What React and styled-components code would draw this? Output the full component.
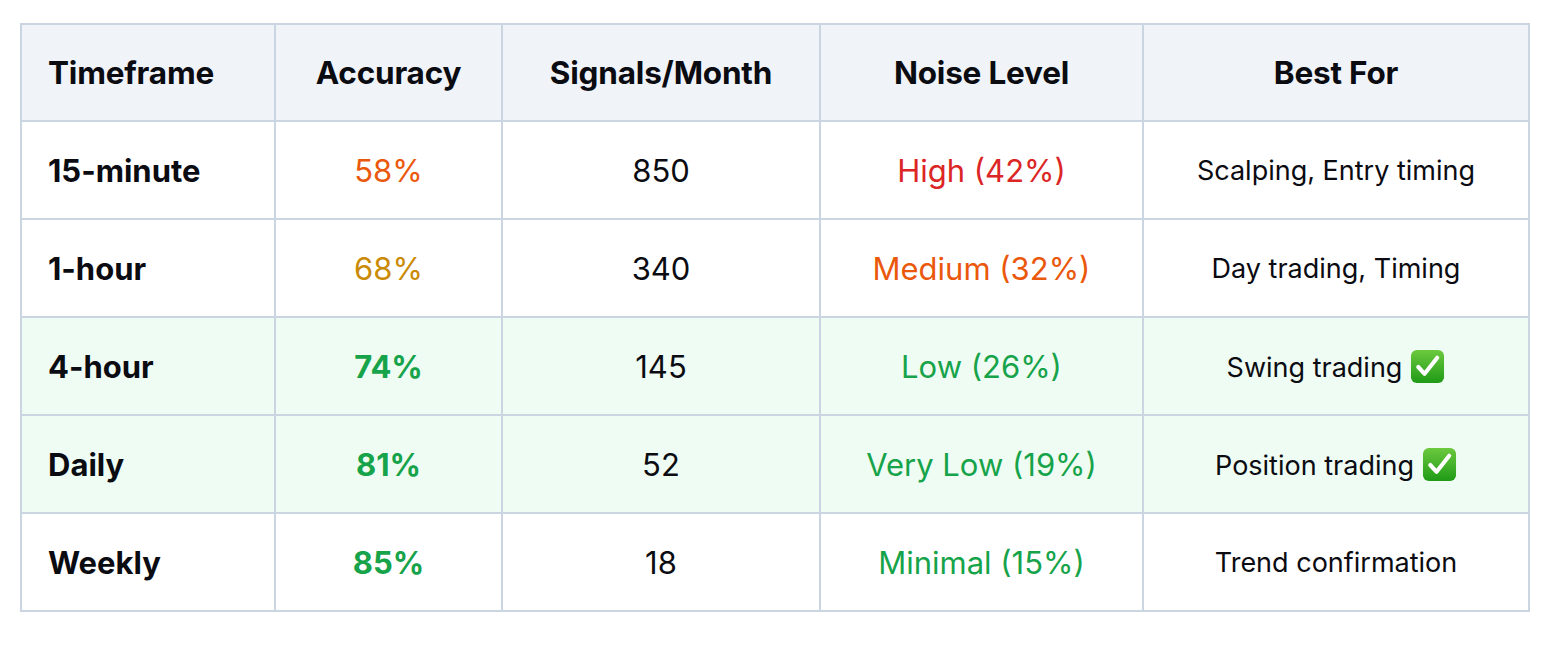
import React from 'react'
import styled, { createGlobalStyle } from 'styled-components'

const GlobalStyle = createGlobalStyle`
  html, body {
    margin: 0;
    padding: 0;
    background: #ffffff;
    font-family: Inter, 'Noto Sans', sans-serif;
    color: #0f0f14;
  }
`

const Page = styled.div`
  padding: 23px 16px 0 20px;
`

const Table = styled.table`
  width: 1508px;
  border-collapse: collapse;
  table-layout: fixed;
  border: 2px solid #cbd5e1;
`

const HeadCell = styled.th`
  box-sizing: border-box;
  width: ${(p) => p.$width}px;
  height: 97px;
  padding: 0 26px;
  background: #f0f4f9;
  border: 2px solid #cbd5e1;
  font-size: 31.5px;
  font-weight: 700;
  letter-spacing: -0.2px;
  text-align: ${(p) => (p.$left ? 'left' : 'center')};
  color: #0b0b12;
`

const Row = styled.tr`
  background: ${(p) => (p.$highlight ? '#effcf3' : '#ffffff')};
`

const Cell = styled.td`
  height: 96px;
  padding: 0 26px;
  border: 2px solid #cbd5e1;
  font-size: ${(p) => (p.$small ? 27 : 31)}px;
  font-weight: ${(p) => (p.$bold ? 700 : 400)};
  text-align: ${(p) => (p.$left ? 'left' : 'center')};
  color: ${(p) => p.$color || '#0b0b12'};
  white-space: nowrap;
`

const Check = styled.svg`
  width: 35px;
  height: 35px;
  vertical-align: -7px;
  margin-left: 8px;
`

const CheckMark = () => (
  <Check viewBox="0 0 36 36">
    <defs>
      <linearGradient id="chk" x1="0" y1="0" x2="0" y2="1">
        <stop offset="0" stopColor="#6cc93e" />
        <stop offset="1" stopColor="#1f9a17" />
      </linearGradient>
    </defs>
    <rect x="1" y="1" width="34" height="34" rx="6" fill="url(#chk)" />
    <path
      d="M8.5 18.5 L15 25.5 L28 9"
      fill="none"
      stroke="#ffffff"
      strokeWidth="4.2"
      strokeLinecap="round"
      strokeLinejoin="round"
    />
  </Check>
)

const ORANGE = '#ea580c'
const AMBER = '#ca8a04'
const RED = '#dc2626'
const GREEN = '#16a34a'

const rows = [
  { tf: '15-minute', acc: '58%', accColor: ORANGE, sig: '850', noise: 'High (42%)', noiseColor: RED, best: 'Scalping, Entry timing' },
  { tf: '1-hour', acc: '68%', accColor: AMBER, sig: '340', noise: 'Medium (32%)', noiseColor: ORANGE, best: 'Day trading, Timing' },
  { tf: '4-hour', acc: '74%', accColor: GREEN, bold: true, sig: '145', noise: 'Low (26%)', noiseColor: GREEN, best: 'Swing trading', check: true, highlight: true },
  { tf: 'Daily', acc: '81%', accColor: GREEN, bold: true, sig: '52', noise: 'Very Low (19%)', noiseColor: GREEN, best: 'Position trading', check: true, highlight: true },
  { tf: 'Weekly', acc: '85%', accColor: GREEN, bold: true, sig: '18', noise: 'Minimal (15%)', noiseColor: GREEN, best: 'Trend confirmation' },
]

export default function App() {
  return (
    <Page>
      <GlobalStyle />
      <Table>
        <thead>
          <tr>
            <HeadCell $width={254} $left>Timeframe</HeadCell>
            <HeadCell $width={227}>Accuracy</HeadCell>
            <HeadCell $width={318}>Signals/Month</HeadCell>
            <HeadCell $width={323}>Noise Level</HeadCell>
            <HeadCell $width={386}>Best For</HeadCell>
          </tr>
        </thead>
        <tbody>
          {rows.map((r) => (
            <Row key={r.tf} $highlight={r.highlight}>
              <Cell $left $bold>{r.tf}</Cell>
              <Cell $color={r.accColor} $bold={r.bold}>{r.acc}</Cell>
              <Cell>{r.sig}</Cell>
              <Cell $color={r.noiseColor}>{r.noise}</Cell>
              <Cell $small>
                {r.best}
                {r.check && <CheckMark />}
              </Cell>
            </Row>
          ))}
        </tbody>
      </Table>
    </Page>
  )
}
